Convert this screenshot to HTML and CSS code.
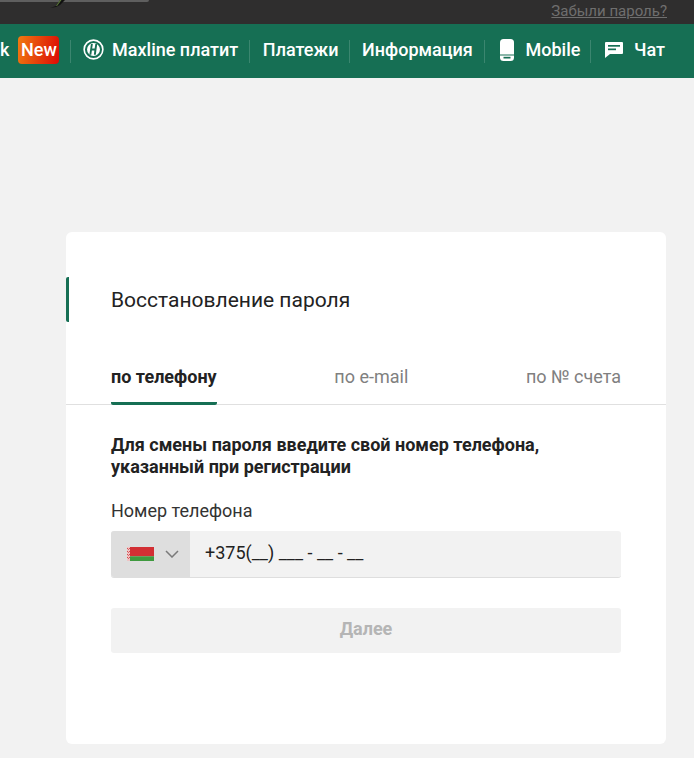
FILE: index.html
```html
<!DOCTYPE html>
<html lang="ru">
<head>
<meta charset="utf-8">
<title>Восстановление пароля</title>
<link rel="stylesheet" href="styles.css">
</head>
<body>
<header class="topbar">
  <div class="search-edge"></div>
  <svg class="logo-tip" viewBox="0 0 16 8" width="16" height="8"><path d="M1 8 L7 6 L11 0 L16 0 L11 5 L7 7 Z" fill="#111"/><path d="M7 6 L11 0 L12.500 0 L8 6 Z" fill="#5d7a3a"/></svg>
  <a class="forgot" href="#">Забыли пароль?</a>
</header>
<nav class="nav">
  <span class="nav-item nav-first">k <span class="new">New</span></span>
  <span class="sep"></span>
  <span class="nav-item nav-pay">
    <svg class="ico" viewBox="0 0 22 22" width="21" height="21"><circle cx="11" cy="11" r="9.800" fill="none" stroke="#fff" stroke-width="1.700"/><circle cx="11" cy="11" r="6.800" fill="#fff"/><path d="M8.300 5.200 L10.300 5.200 L9.600 10 L12.200 10 L12.900 5.200 L14.900 5.200 L13.400 16.500 L11.400 16.500 L11.900 12 L9.300 12 L8.700 16.500 L6.700 16.500 Z" fill="#166f54"/></svg>
    Maxline платит</span>
  <span class="sep"></span>
  <span class="nav-item nav-payments">Платежи</span>
  <span class="sep"></span>
  <span class="nav-item">Информация</span>
  <span class="sep"></span>
  <span class="nav-item nav-mobile">
    <svg class="ico" viewBox="0 0 14 22" width="14" height="22"><path d="M3.500 0 H10.500 Q14 0 14 3.500 V15.500 H0 V3.500 Q0 0 3.500 0 Z" fill="#fff"/><path d="M0 16.500 H14 V18.500 Q14 22 10.500 22 H3.500 Q0 22 0 18.500 Z" fill="#fff"/><rect x="3.500" y="17.800" width="7" height="1.700" fill="#166f54"/></svg>
    Mobile</span>
  <span class="sep sep-chat"></span>
  <span class="nav-item nav-chat">
    <svg class="ico" viewBox="0 0 20 18" width="20" height="18"><path d="M2 1 H18 Q19 1 19 2 V12 Q19 13 18 13 H6 L1 17 V2 Q1 1 2 1 Z" fill="#fff"/><rect x="4" y="4" width="12" height="1.700" fill="#166f54"/><rect x="4" y="7.500" width="8" height="1.700" fill="#166f54"/></svg>
    Чат</span>
</nav>
<main class="page">
  <section class="card">
    <h1 class="title">Восстановление пароля</h1>
    <div class="tabs">
      <a class="tab tab-active" href="#">по телефону</a>
      <a class="tab" href="#">по e-mail</a>
      <a class="tab" href="#">по № счета</a>
    </div>
    <div class="body">
      <p class="hint">Для смены пароля введите свой номер телефона, указанный при регистрации</p>
      <label class="label">Номер телефона</label>
      <div class="phone">
        <div class="country">
          <svg class="flag" viewBox="0 0 27 14" width="27" height="14"><rect width="27" height="9.300" fill="#d22f34"/><rect y="9.300" width="27" height="4.700" fill="#3f9a3f"/><rect width="3" height="14" fill="#eec4c4"/><path d="M0 1 L1.500 2.500 L3 1 M0 4 L1.500 5.500 L3 4 M0 7 L1.500 8.500 L3 7 M0 10 L1.500 11.500 L3 10" stroke="#d22f34" stroke-width=".8" fill="none"/></svg>
          <svg class="chev" viewBox="0 0 14 8" width="14" height="8"><path d="M1 1 L7 7 L13 1" fill="none" stroke="#7a7a7a" stroke-width="1.500"/></svg>
        </div>
        <div class="phone-value">+375(__) ___ - __ - __</div>
      </div>
      <button class="next" type="button">Далее</button>
    </div>
  </section>
</main>
</body>
</html>
```

FILE: styles.css
```css
* { box-sizing: border-box; }
html, body { margin: 0; padding: 0; }
body {
  width: 694px;
  height: 758px;
  overflow: hidden;
  background: #f2f2f2;
  font-family: Roboto, "Liberation Sans", sans-serif;
  color: #222;
}
.topbar {
  height: 24px;
  background: #2f2e2e;
  display: flex;
  justify-content: flex-end;
  padding-right: 27px;
  position: relative;
}
.search-edge {
  position: absolute;
  left: 0;
  top: 0;
  width: 149px;
  height: 2px;
  background: #5f5f5f;
  border-radius: 0 0 3px 0;
}
.logo-tip { position: absolute; left: 49px; top: 0; }
.forgot {
  font-size: 15px;
  line-height: 22px;
  color: #6f6f6f;
  text-decoration: underline;
}
.nav {
  height: 54px;
  background: #166f54;
  display: flex;
  align-items: center;
  justify-content: flex-end;
  padding-right: 29px;
  color: #fff;
  font-size: 18px;
  font-weight: 500;
  white-space: nowrap;
}
.nav-item { display: flex; align-items: center; padding-bottom: 3px; }
.nav-first { gap: 9px; padding-bottom: 3px; }
.new {
  width: 41px;
  height: 28px;
  border-radius: 4px;
  background: linear-gradient(100deg, #f07a10, #dc0a05);
  display: flex;
  align-items: center;
  justify-content: center;
}
.sep { width: 1px; height: 23px; background: rgba(255,255,255,.16); margin: 0 12px 0 11px; }
.sep-chat { margin: 0 13px 0 10px; }
.ico { flex: none; }
.nav-pay .ico { margin-right: 8px; }
.nav-payments { margin-left: 1px; }
.nav-mobile { margin-left: 3px; }
.nav-mobile .ico { margin-right: 12px; }
.nav-chat .ico { margin-right: 10px; }
.page { padding: 154px 28px 0 66px; }
.card {
  width: 600px;
  height: 512px;
  background: #fff;
  border-radius: 6px;
  padding-top: 45px;
}
.title {
  margin: 0;
  height: 45px;
  padding-left: 42px;
  border-left: 3px solid #166f54;
  border-radius: 2px 0 0 2px;
  font-size: 21px;
  font-weight: 400;
  line-height: 47px;
  color: #222;
}
.tabs {
  margin-top: 33px;
  padding: 0 45px;
  height: 50px;
  display: flex;
  justify-content: space-between;
  border-bottom: 1px solid #e0e0e0;
}
.tab {
  height: 49px;
  font-size: 18px;
  line-height: 44px;
  color: #808080;
  text-decoration: none;
}
.tab-active {
  height: 50px;
  color: #222;
  font-weight: 700;
  border-bottom: 3px solid #166f54;
  border-radius: 2px;
}
.body { padding: 0 45px; }
.hint {
  margin: 29px 0 0;
  font-size: 18px;
  font-weight: 700;
  line-height: 22px;
  color: #222;
}
.label {
  display: block;
  margin-top: 21px;
  font-size: 18px;
  line-height: 24px;
  color: #333;
}
.phone {
  margin-top: 8px;
  height: 47px;
  display: flex;
  background: #f2f2f2;
  border-bottom: 1px solid #dedede;
  border-radius: 3px;
}
.country {
  width: 79px;
  background: #dedede;
  display: flex;
  align-items: center;
  padding-left: 16px;
  gap: 11px;
  border-radius: 3px 0 0 3px;
}
.phone-value {
  padding-left: 15px;
  font-size: 18px;
  line-height: 43px;
  color: #222;
}
.next {
  display: block;
  width: 100%;
  height: 45px;
  margin-top: 30px;
  border: 0;
  border-radius: 3px;
  background: #f2f2f2;
  color: #b5b5b5;
  font-family: inherit;
  font-size: 18px;
  font-weight: 700;
  padding: 0 0 5px;
}
```
